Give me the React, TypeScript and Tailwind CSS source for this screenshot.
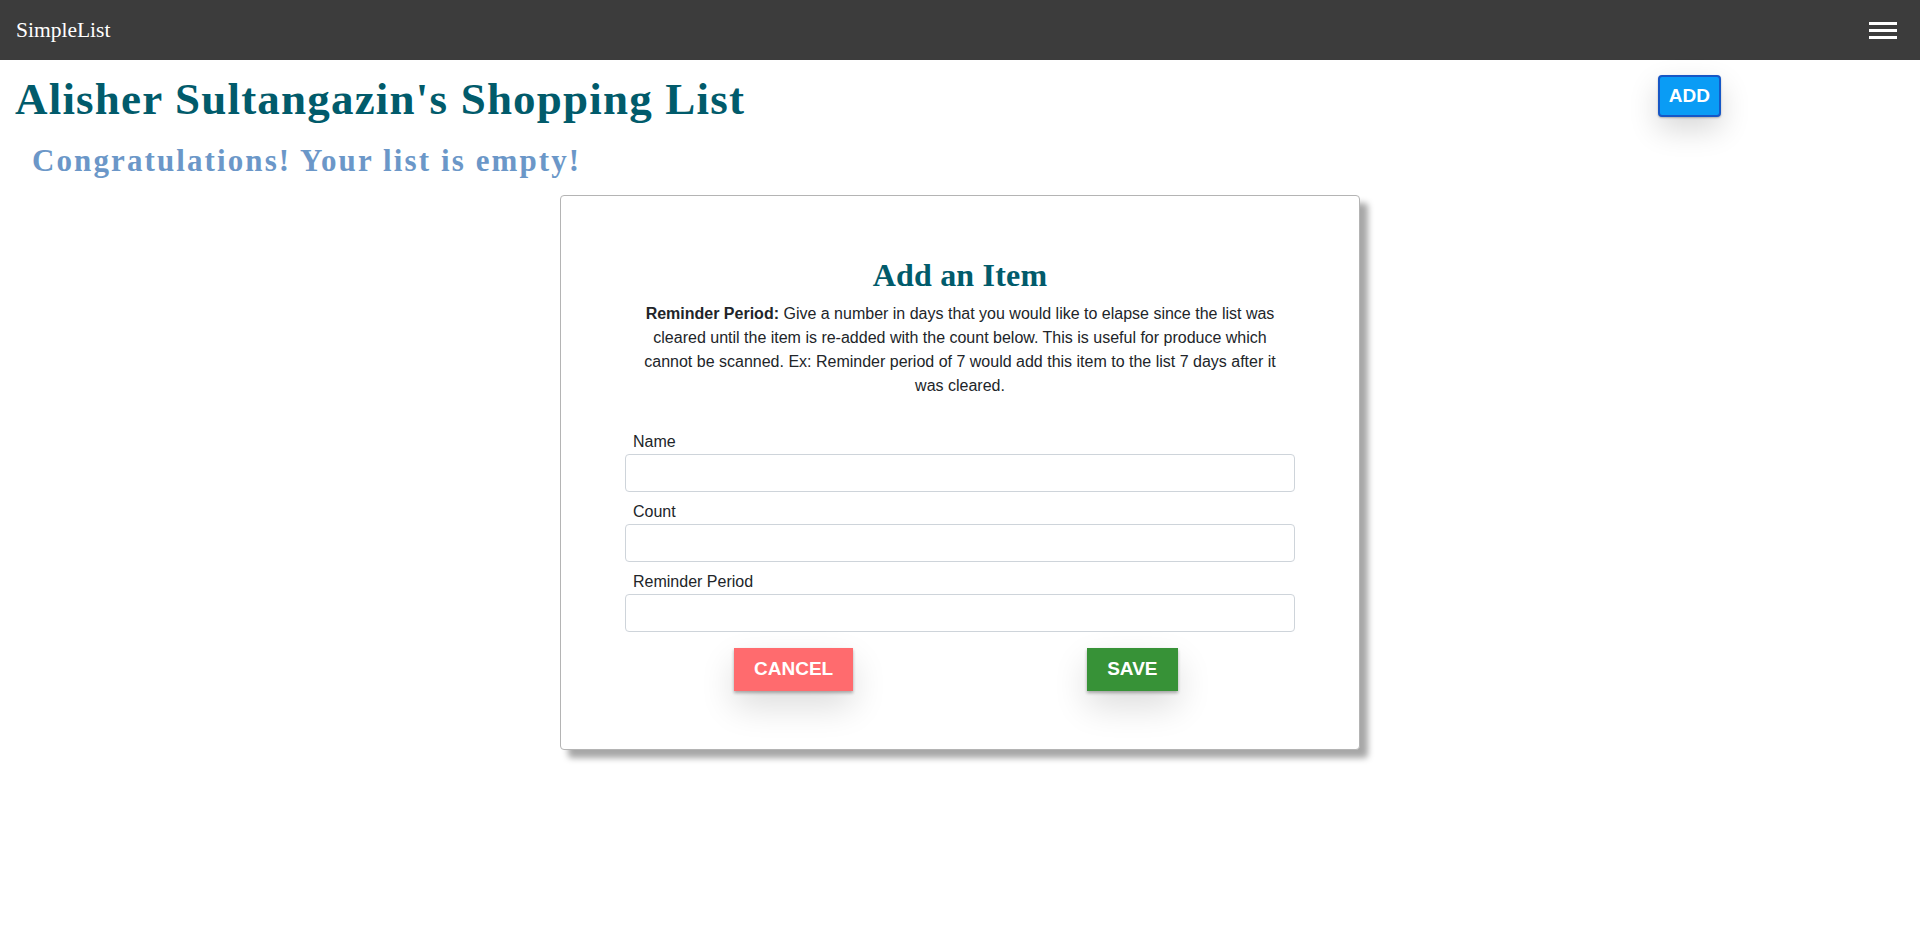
import { useState } from "react";

const serif = "font-['Liberation_Serif','Times_New_Roman',serif]";
const sans = "font-['Liberation_Sans',Arial,sans-serif]";

function Field({ label }: { label: string }) {
    const [value, setValue] = useState("");
    return (
        <div className="flex flex-col">
            <label className={`${sans} pl-2 text-[16px] leading-[20px] text-[#212529]`}>{label}</label>
            <input
                value={value}
                onChange={(e) => setValue(e.target.value)}
                className="mt-[2px] h-[38px] w-full rounded-[4px] border border-[#ced4da] bg-white px-3 outline-none"
            />
        </div>
    );
}

export default function App() {
    return (
        <div className="min-h-screen bg-white">
            {/* Top bar */}
            <nav className="flex h-[60px] items-center justify-between bg-[#3c3c3c] pl-4 pr-[23px]">
                <span className={`${serif} text-[21.5px] text-white`}>SimpleList</span>
                <button className="flex flex-col gap-[4px]" aria-label="menu">
                    <span className="block h-[3px] w-[28px] bg-white" />
                    <span className="block h-[3px] w-[28px] bg-white" />
                    <span className="block h-[3px] w-[28px] bg-white" />
                </button>
            </nav>

            {/* Header row */}
            <div className="mt-[12px] flex items-start justify-between pl-[15px] pr-[199px]">
                <h1 className={`${serif} text-[45px] font-bold leading-[54px] tracking-[1.2px] text-[#015b6b]`}>
                    Alisher Sultangazin's Shopping List
                </h1>
                <button className={`${sans} mt-[3px] h-[42px] rounded-[4px] border-2 border-[#1657c6] bg-[#0a9cf5] px-[9px] text-[19px] font-bold text-white shadow-[0_1px_2px_rgba(0,0,0,0.25),0_12px_30px_rgba(0,0,0,0.16)]`}>
                    ADD
                </button>
            </div>

            <h2 className={`${serif} mt-[16px] pl-[32px] text-[31px] font-bold leading-[37px] tracking-[2.1px] text-[#6b97c8]`}>
                Congratulations! Your list is empty!
            </h2>

            {/* Add item modal */}
            <div className="mx-auto mt-[16px] w-[800px] rounded-[4px] border border-[#b4b4b4] bg-white pt-[60px] pb-[58px] shadow-[8px_8px_6px_rgba(0,0,0,0.35)]">
                <h3 className={`${serif} text-center text-[32px] font-bold leading-[38px] tracking-[0.2px] text-[#015b6b]`}>
                    Add an Item
                </h3>
                <p className={`${sans} mx-auto mt-[8px] w-[664px] text-center text-[16px] leading-[24px] text-[#212529]`}>
                    <b>Reminder Period:</b> Give a number in days that you would like to elapse since the list was
                    cleared until the item is re-added with the count below. This is useful for produce which cannot
                    be scanned. Ex: Reminder period of 7 would add this item to the list 7 days after it was cleared.
                </p>

                <div className="mx-auto mt-[34px] flex w-[670px] flex-col gap-[10px]">
                    <Field label="Name" />
                    <Field label="Count" />
                    <Field label="Reminder Period" />
                </div>

                <div className="mx-auto mt-[16px] flex w-[670px] gap-[234px] pl-[109px]">
                    <button className={`${sans} h-[43px] bg-[#ff6b6e] px-5 text-[19px] font-bold text-white shadow-[0_2px_3px_rgba(0,0,0,0.3),0_15px_35px_rgba(0,0,0,0.14)]`}>
                        CANCEL
                    </button>
                    <button className={`${sans} h-[43px] bg-[#379237] px-5 text-[19px] font-bold text-white shadow-[0_2px_3px_rgba(0,0,0,0.3),0_15px_35px_rgba(0,0,0,0.14)]`}>
                        SAVE
                    </button>
                </div>
            </div>
        </div>
    );
}
